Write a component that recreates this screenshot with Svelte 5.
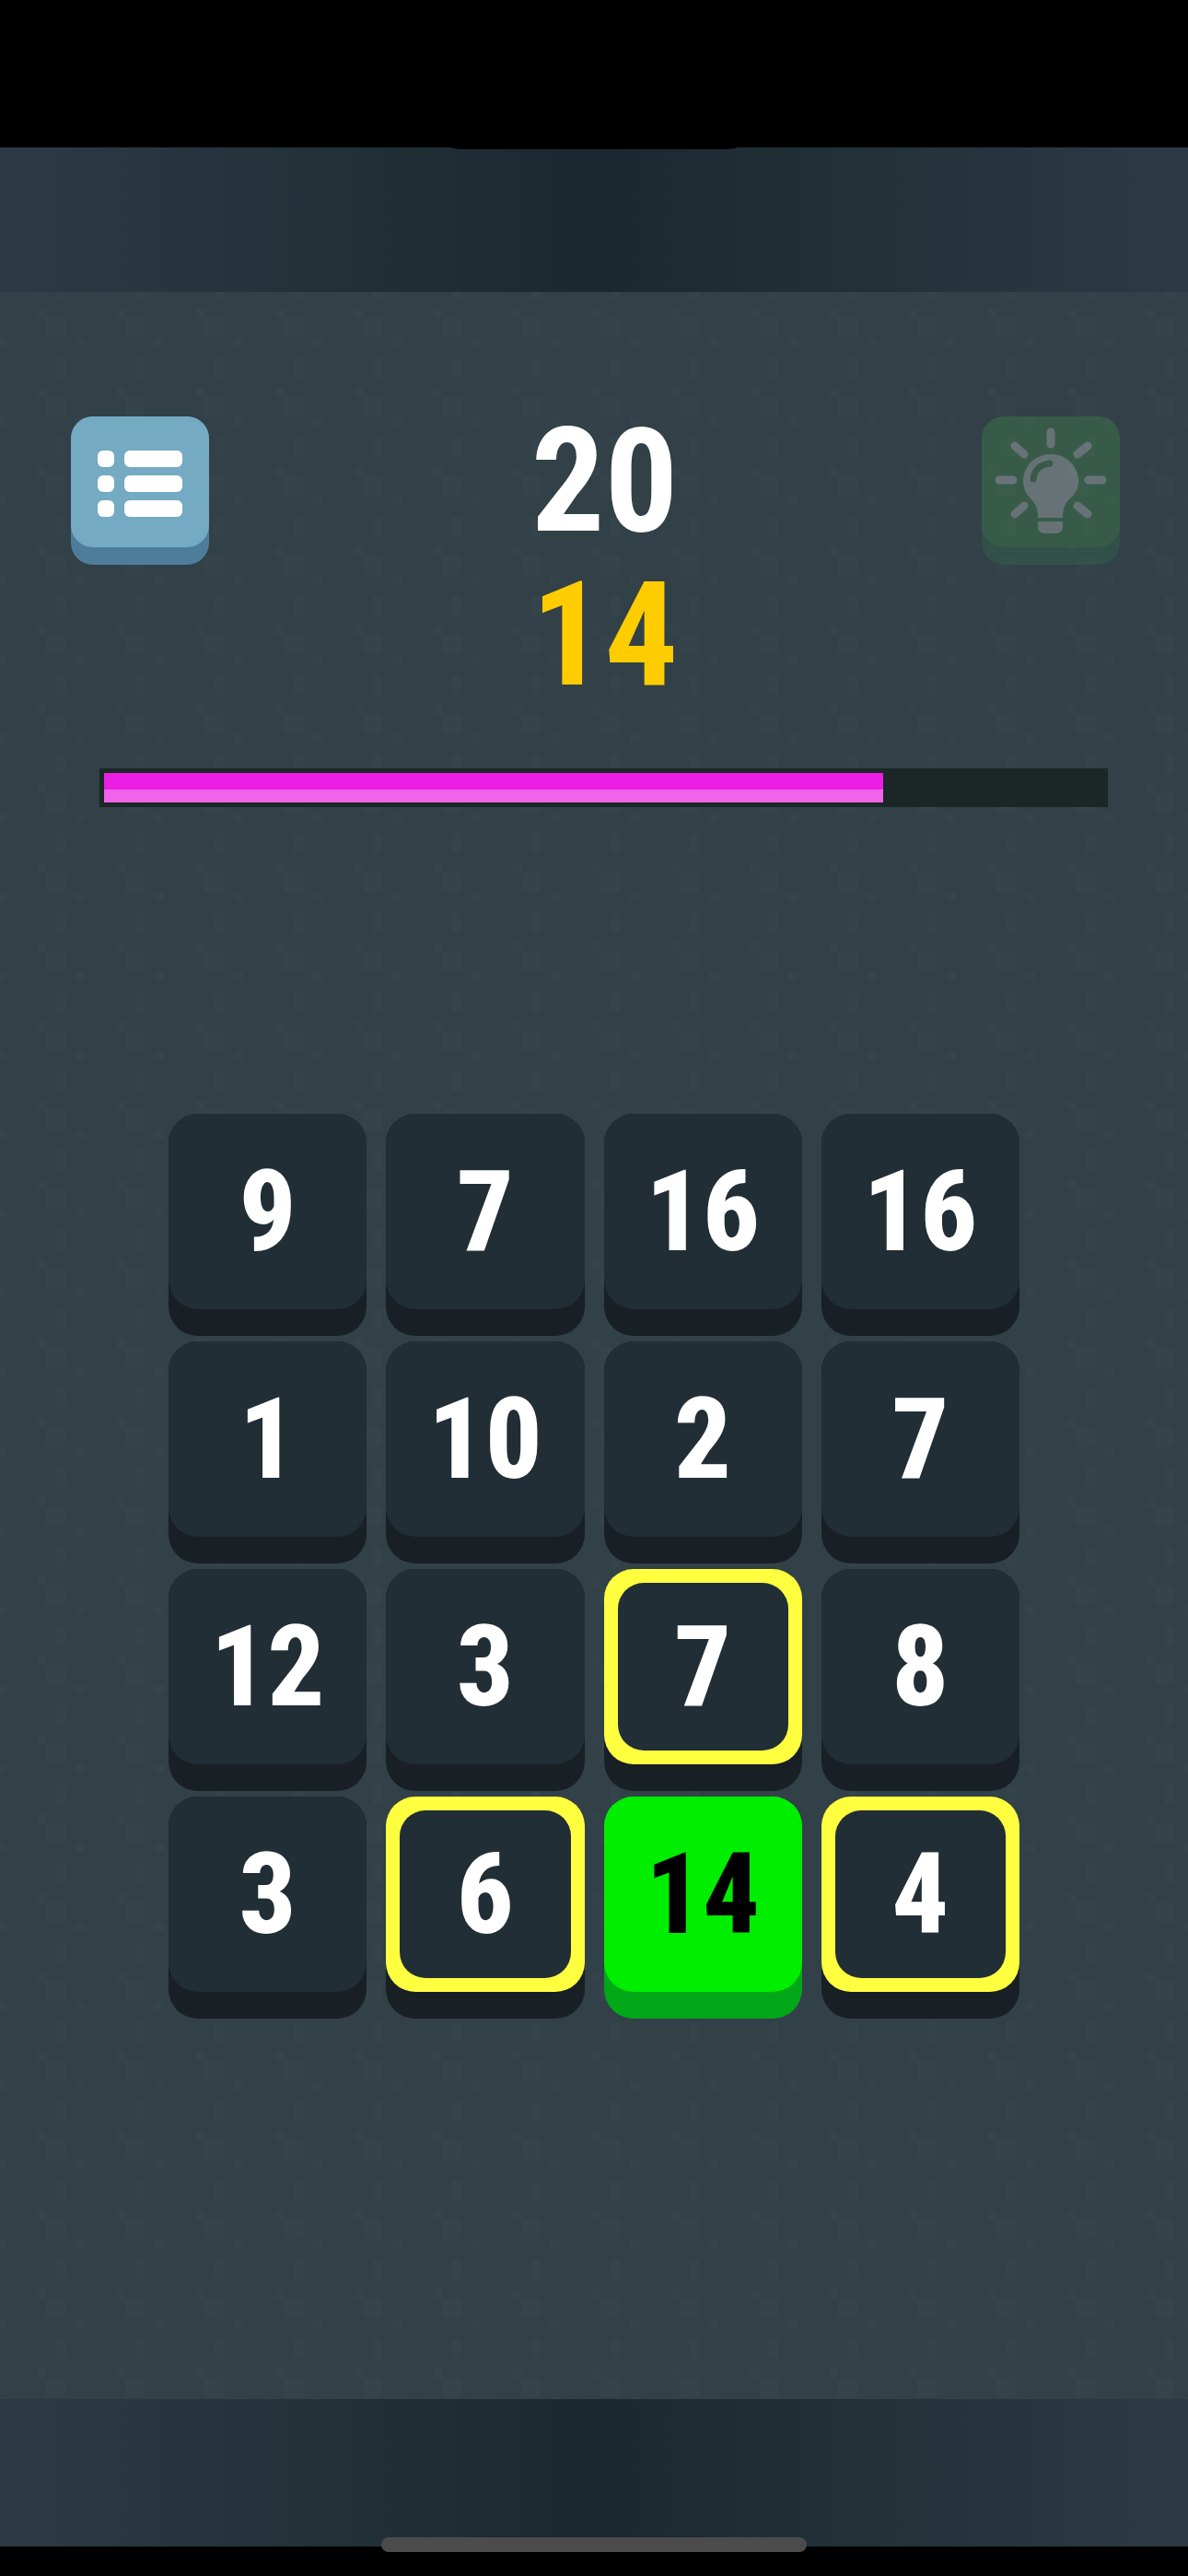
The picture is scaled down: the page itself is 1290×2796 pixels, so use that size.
<script>
    let target = 20;
    let current = 14;
    let timeLeft = 78;

    let tiles = [
        { value: 9 }, { value: 7 }, { value: 16 }, { value: 16 },
        { value: 1 }, { value: 10 }, { value: 2 }, { value: 7 },
        { value: 12 }, { value: 3 }, { value: 7, state: "open" }, { value: 8 },
        { value: 3 }, { value: 6, state: "open" }, { value: 14, state: "active" }, { value: 4, state: "open" }
    ];
</script>

<div class="screen">
    <div class="status"><div class="notch"></div></div>
    <div class="band"></div>

    <main>
        <header>
            <button class="key menu" aria-label="Menu">
                <span class="face">
                    <svg viewBox="0 0 150 142" fill="#fff">
                        {#each [37, 64, 91] as y}
                            <rect x="29" {y} width="18" height="18" rx="6" />
                            <rect x="58" {y} width="63" height="18" rx="6" />
                        {/each}
                    </svg>
                </span>
            </button>

            <div class="score">
                <div class="target">{target}</div>
                <div class="current">{current}</div>
            </div>

            <button class="key hint" aria-label="Hint" disabled>
                <span class="face">
                    <svg viewBox="0 0 150 142" fill="#e0e7e4">
                        <path d="M75 17V30M36 32L46 41M115 32L104 41M19 69H34M116 69H131M36 106L46 97M115 106L104 97" stroke="#e0e7e4" stroke-width="9" stroke-linecap="round" />
                        <path d="M75 41C58 41 45 54 45 70C45 79 49 85 54 90C60 96 61 103 61 110H88C88 103 89 96 95 90C101 85 105 79 105 70C105 54 92 41 75 41Z" />
                        <path d="M61 114H88V119Q88 127 80 127H69Q61 127 61 119Z" />
                        <path d="M56 68C57 58 64 52 74 51" fill="none" stroke="#469a4e" stroke-width="7" stroke-linecap="round" />
                    </svg>
                </span>
            </button>
        </header>

        <div class="timer">
            <div class="fill" style="width: {timeLeft}%"></div>
        </div>

        <div class="board">
            {#each tiles as tile}
                <button class="tile {tile.state || ''}">
                    <span class="face">
                        <span class="number">{tile.value}</span>
                    </span>
                </button>
            {/each}
        </div>
    </main>

    <div class="band bottom"></div>
    <div class="footer"><div class="home"></div></div>
</div>

<style>
    :global(body){
        background: #000;
    }
    .screen{
        display: flex;
        flex-direction: column;
        min-height: 100vh;
        font-family: "Roboto Condensed", Roboto, sans-serif;
        font-weight: bold;
    }
    .status{
        position: relative;
        height: 160px;
        background: #000;
    }
    .notch{
        position: absolute;
        top: 100%;
        left: 38%;
        right: 38%;
        height: 2px;
        border-radius: 0 0 20px 20px / 0 0 2px 2px;
        background: #000;
    }
    .band{
        height: 157px;
        background: linear-gradient(90deg, #2d3a43, #1a2830 50%, #2d3a43);
    }
    .bottom{
        height: 160px;
    }
    .footer{
        position: relative;
        height: 32px;
        background: #000;
    }
    .home{
        position: absolute;
        top: -10px;
        left: 50%;
        width: 462px;
        height: 16px;
        margin-left: -231px;
        border-radius: 8px;
        background: #4b4b4b;
    }
    main{
        flex: 1;
        padding-top: 122px;
        background: #324047 url("data:image/svg+xml,%3Csvg xmlns='http://www.w3.org/2000/svg' width='86' height='86' fill='%2335434a'%3E%3Cpath d='M50 28h21v21h-21zM41 18h9v10h-9zM82 50h4v9h-4zM0 50h6v9h-6zM61 72h10v14h-10zM61 0h10v7h-10z'/%3E%3C/svg%3E");
    }
    header{
        display: grid;
        grid-template-columns: 150px 1fr 150px;
        padding: 0 74px 0 77px;
    }
    button{
        padding: 0;
        border: none;
        font: inherit;
        cursor: pointer;
    }
    .face{
        display: flex;
        box-sizing: border-box;
    }
    .key{
        height: 161px;
        margin-top: 13px;
        padding-bottom: 19px;
        border-radius: 24px;
    }
    .key .face{
        height: 142px;
        border-radius: 24px;
    }
    .key svg{
        width: 100%;
        height: 100%;
    }
    .menu{
        background: #4e7d9c;
    }
    .menu .face{
        background: #75aac3;
    }
    .hint{
        background: #2f754e;
        opacity: 0.3;
    }
    .hint .face{
        background: #469a4e;
    }
    .score{
        padding-left: 20px;
        font-size: 158px;
        line-height: 167px;
        text-align: center;
    }
    .target{
        color: #fff;
    }
    .current{
        color: #ffcc00;
    }
    .timer{
        height: 32px;
        margin: 61px 87px 0 108px;
        padding: 5px;
        background: #1b2626;
    }
    .fill{
        height: 100%;
        background: linear-gradient(#eb1fe3 18px, #f163ea 18px);
    }
    .board{
        display: grid;
        grid-template-columns: repeat(4, 1fr);
        gap: 6px 21px;
        margin: 333px 183px 0;
    }
    .tile{
        height: 241px;
        padding-bottom: 29px;
        border-radius: 32px;
        background: #181f25;
        color: #fff;
        font-size: 122px;
        font-weight: 800;
    }
    .tile .face{
        height: 212px;
        padding: 15px;
        border-radius: 32px;
        background: #212e36;
    }
    .number{
        display: flex;
        flex: 1;
        align-items: center;
        justify-content: center;
        border-radius: 28px;
    }
    .open .face{
        background: #ffff40;
    }
    .open .number{
        background: #212e36;
    }
    .active{
        background: #00a818;
        color: #000;
    }
    .active .face{
        background: #00ee00;
    }
</style>
